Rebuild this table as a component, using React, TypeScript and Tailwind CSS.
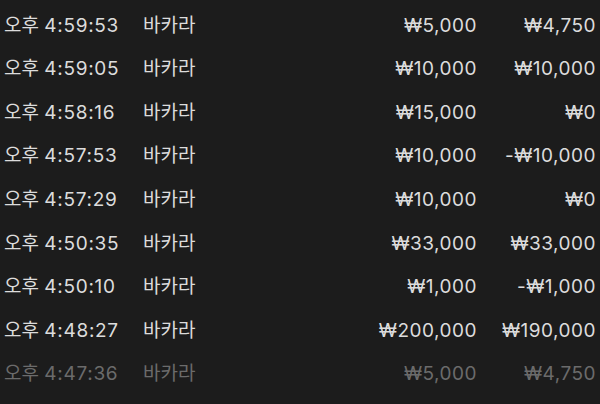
const rows = [
  { time: "4:59:53", bet: "₩5,000", win: "₩4,750" },
  { time: "4:59:05", bet: "₩10,000", win: "₩10,000" },
  { time: "4:58:16", bet: "₩15,000", win: "₩0" },
  { time: "4:57:53", bet: "₩10,000", win: "-₩10,000" },
  { time: "4:57:29", bet: "₩10,000", win: "₩0" },
  { time: "4:50:35", bet: "₩33,000", win: "₩33,000" },
  { time: "4:50:10", bet: "₩1,000", win: "-₩1,000" },
  { time: "4:48:27", bet: "₩200,000", win: "₩190,000" },
  { time: "4:47:36", bet: "₩5,000", win: "₩4,750", faded: true },
];

export default function App() {
  return (
    <div
      className="h-[404px] w-[600px] overflow-hidden bg-[#1c1c1c] pt-[4px] text-[19px] text-[#dcdcdc]"
      style={{ fontFamily: 'Inter, "Noto Sans CJK KR", sans-serif' }}
    >
      {rows.map((r) => (
        <div
          key={r.time}
          className={`flex h-[43.6px] items-center pl-[4px] pr-[4px] ${r.faded ? "text-[#6b6b6b]" : ""}`}
        >
          <div className="w-[139px] whitespace-nowrap">
            오후 <span className="tracking-[0.7px]">{r.time}</span>
          </div>
          <div className="whitespace-nowrap">바카라</div>
          <div className="ml-auto whitespace-nowrap text-right tracking-[0.5px]">{r.bet}</div>
          <div className="w-[119px] whitespace-nowrap text-right tracking-[0.5px]">{r.win}</div>
        </div>
      ))}
    </div>
  );
}
